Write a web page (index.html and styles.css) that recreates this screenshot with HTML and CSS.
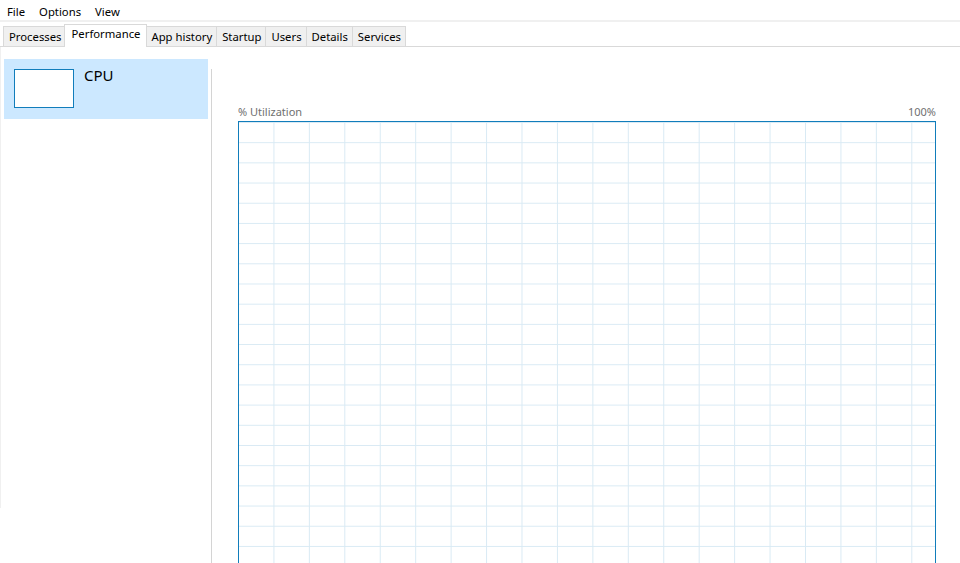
FILE: index.html
```html
<!DOCTYPE html>
<html lang="en">
<head>
<meta charset="utf-8">
<title>Task Manager</title>
<link rel="stylesheet" href="styles.css">
</head>
<body>
<div class="menubar">
  <span class="menu-item">File</span>
  <span class="menu-item">Options</span>
  <span class="menu-item">View</span>
</div>
<div class="tabstrip">
  <div class="tab">Processes</div>
  <div class="tab active">Performance</div>
  <div class="tab">App history</div>
  <div class="tab">Startup</div>
  <div class="tab">Users</div>
  <div class="tab">Details</div>
  <div class="tab last">Services</div>
</div>
<div class="main">
  <aside class="sidebar">
    <div class="perf-item selected">
      <div class="thumb"></div>
      <div class="perf-label">CPU</div>
    </div>
  </aside>
  <div class="divider"></div>
  <section class="detail">
    <div class="graph-head">
      <span>% Utilization</span>
      <span>100%</span>
    </div>
    <div class="graph"></div>
  </section>
</div>
</body>
</html>
```
FILE: styles.css
```css
html, body {
  margin: 0;
  padding: 0;
  height: 100%;
  overflow: hidden;
  background: #ffffff;
}
body {
  font-family: "Noto Sans", "Open Sans", sans-serif;
  font-size: 11.3px;
  color: #000;
}
.menubar {
  display: flex;
  align-items: flex-start;
  box-sizing: border-box;
  height: 22px;
  padding-top: 3px;
  border-bottom: 2px solid #f0f0f0;
  line-height: 17px;
}
.menu-item {
  padding: 0 7px;
}
.tabstrip {
  display: flex;
  align-items: flex-end;
  height: 24px;
  padding-left: 3px;
  border-bottom: 1px solid #d9d9d9;
}
.tab {
  box-sizing: border-box;
  height: 20px;
  line-height: 20px;
  padding: 0 4px 0 5px;
  background: #f0f0f0;
  border-top: 1px solid #d9d9d9;
  border-left: 1px solid #d9d9d9;
  white-space: nowrap;
}
.tab.last {
  border-right: 1px solid #d9d9d9;
}
.tab.active {
  position: relative;
  z-index: 1;
  height: 23px;
  margin: 0 -2px -1px -2px;
  padding: 0 6px 0 7px;
  line-height: 18px;
  background: #ffffff;
  border-right: 1px solid #d9d9d9;
}
.tab.active + .tab {
  border-left: 1px solid #d9d9d9;
}
.main {
  display: flex;
  height: 600px;
}
.sidebar {
  box-sizing: border-box;
  width: 211px;
  height: 461px;
  border-left: 1px solid #f0f0f0;
  padding: 12px 0 0 3px;
}
.perf-item {
  display: flex;
  align-items: flex-start;
  width: 204px;
  height: 60px;
  box-sizing: border-box;
  padding: 10px 0 0 10px;
}
.perf-item.selected {
  background: #cce8ff;
}
.thumb {
  box-sizing: border-box;
  width: 60px;
  height: 39px;
  background: #ffffff;
  border: 1px solid #117dbb;
}
.perf-label {
  margin-left: 10px;
  margin-top: -4px;
  font-size: 15px;
  line-height: 20px;
}
.divider {
  width: 1px;
  margin-top: 22px;
  background: #d4d4d4;
}
.detail {
  flex: 1;
  padding: 57px 24px 0 26px;
}
.graph-head {
  display: flex;
  justify-content: space-between;
  height: 16px;
  line-height: 16px;
  margin-bottom: 1px;
  font-size: 11px;
  color: #707070;
}
.graph {
  box-sizing: border-box;
  height: 600px;
  border: 1px solid #117dbb;
  border-bottom: none;
  background-origin: border-box;
  background-image:
    linear-gradient(to right, #d9eaf4 1px, transparent 1px),
    linear-gradient(to bottom, #d9eaf4 1px, transparent 1px);
  background-size: 35.45px 20.2px, 35.45px 20.2px;
  background-position: 0 0, 0 1px;
}
```
